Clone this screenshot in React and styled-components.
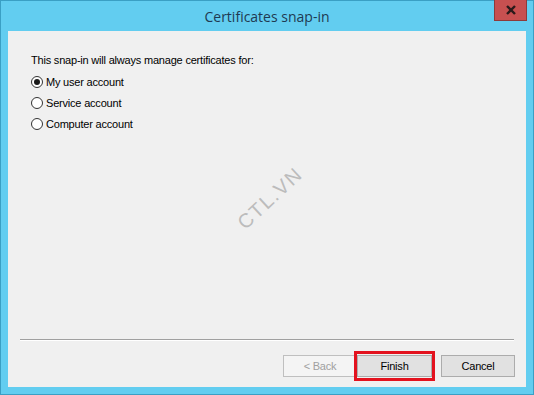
import React from "react";
import styled, { createGlobalStyle } from "styled-components";

const Global = createGlobalStyle`
  html, body { margin: 0; padding: 0; background: #61cdef; }
  body { width: 534px; height: 395px; overflow: hidden; }
`;

const Window = styled.div`
  box-sizing: border-box;
  width: 534px;
  height: 395px;
  background: #62cdf0;
  border: 1px solid #3a9fc4;
  display: flex;
  flex-direction: column;
  padding: 0 7px 7px 7px;
  position: relative;
`;

const TitleBar = styled.div`
  height: 30px;
  display: flex;
  align-items: center;
  justify-content: center;
  font-family: "Open Sans", "Noto Sans", sans-serif;
  font-size: 14px;
  color: #1f3a52;
`;

const CloseButton = styled.div`
  position: absolute;
  top: -1px;
  right: 6px;
  width: 33px;
  height: 21px;
  background: #c75050;
  border: 1px solid #8e3a3a;
  border-top: none;
  box-sizing: border-box;
  display: flex;
  align-items: center;
  justify-content: center;
`;

const Client = styled.div`
  flex: 1;
  background: #f0f0f0;
  display: flex;
  flex-direction: column;
  font-family: "Liberation Sans", Arial, sans-serif;
  font-size: 11px;
  letter-spacing: -0.2px;
  color: #000;
  position: relative;
`;

const Body = styled.div`
  flex: 1;
  padding: 23px 0 0 23px;
  display: flex;
  flex-direction: column;
`;

const Prompt = styled.div`
  margin-bottom: 5px;
`;

const RadioRow = styled.label`
  display: flex;
  align-items: center;
  gap: 3px;
  height: 21px;
`;

const RadioCircle = styled.span`
  box-sizing: border-box;
  width: 12px;
  height: 12px;
  border-radius: 50%;
  border: 1px solid #333;
  background: #fff;
  display: flex;
  align-items: center;
  justify-content: center;
  &::after {
    content: "";
    width: 6px;
    height: 6px;
    border-radius: 50%;
    background: ${(p) => (p.$checked ? "#1a1a1a" : "transparent")};
  }
`;

const Watermark = styled.div`
  position: absolute;
  left: 222px;
  top: 156px;
  transform: rotate(-43deg);
  font-family: "Liberation Sans", Arial, sans-serif;
  font-size: 20px;
  letter-spacing: 1.5px;
  color: #bcbcbc;
`;

const Separator = styled.div`
  margin: 0 12px 0 12px;
  height: 1px;
  background: #a0a0a0;
  border-bottom: 1px solid #ffffff;
`;

const ButtonRow = styled.div`
  display: flex;
  justify-content: flex-end;
  align-items: center;
  padding: 14px 11px 10px 0;
`;

const Highlight = styled.div`
  position: relative;
  border: 3px solid #e3121e;
  padding: 1px 0;
  display: flex;
  margin: -4px -3px;
`;

const Button = styled.div`
  box-sizing: border-box;
  width: ${(p) => p.$w || 74}px;
  height: 22px;
  margin-left: ${(p) => p.$ml || 0}px;
  border: 1px solid ${(p) => (p.$disabled ? "#bfbfbf" : "#acacac")};
  background: ${(p) => (p.$disabled ? "#f4f4f4" : "#e1e1e1")};
  color: ${(p) => (p.$disabled ? "#a0a0a0" : "#000")};
  display: flex;
  align-items: center;
  justify-content: center;
  font-size: 11px;
`;

const Radio = ({ checked, children }) => (
  <RadioRow>
    <RadioCircle $checked={checked} />
    {children}
  </RadioRow>
);

export default function App() {
  return (
    <>
      <Global />
      <Window>
        <TitleBar>Certificates snap-in</TitleBar>
        <CloseButton>
          <svg width="12" height="10" viewBox="0 0 12 10">
            <path d="M2 1 L10 9 M10 1 L2 9" stroke="#2a1a1a" strokeWidth="2.4" />
          </svg>
        </CloseButton>
        <Client>
          <Body>
            <Prompt>This snap-in will always manage certificates for:</Prompt>
            <Radio checked>My user account</Radio>
            <Radio>Service account</Radio>
            <Radio>Computer account</Radio>
          </Body>
          <Watermark>CTL.VN</Watermark>
          <Separator />
          <ButtonRow>
            <Button $disabled>&lt; Back</Button>
            <Highlight>
              <Button $w={75}>Finish</Button>
            </Highlight>
            <Button $ml={9}>Cancel</Button>
          </ButtonRow>
        </Client>
      </Window>
    </>
  );
}
